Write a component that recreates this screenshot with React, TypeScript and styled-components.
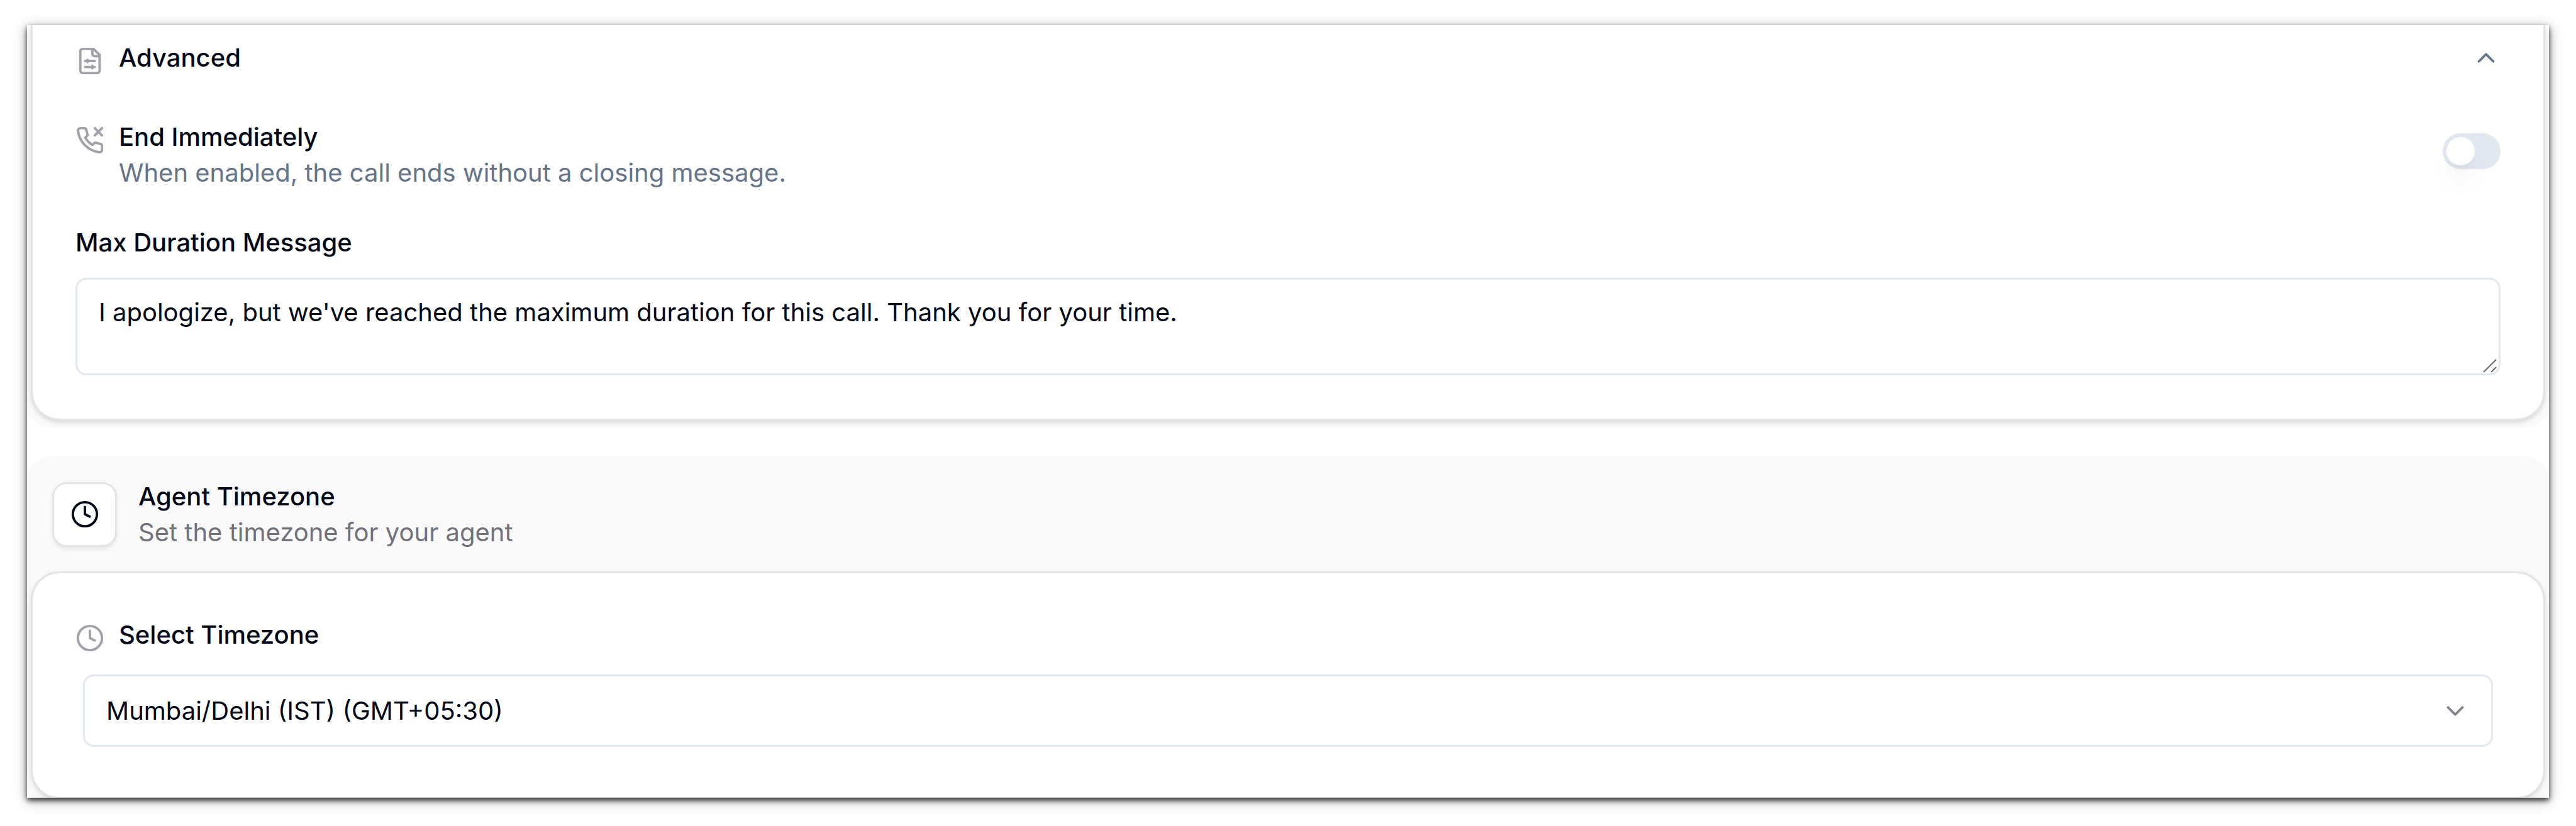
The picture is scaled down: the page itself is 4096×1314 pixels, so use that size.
import React, { useState } from "react";
import styled, { createGlobalStyle } from "styled-components";
import { ChevronDown, ChevronUp, Clock } from "lucide-react";

const GlobalStyle = createGlobalStyle`
  *, *::before, *::after { box-sizing: border-box; }
  body {
    margin: 0;
    background: #ffffff;
    color: #020817;
    font-family: Inter, "Liberation Sans", sans-serif;
    font-size: 40px;
    line-height: 57px;
  }
  button, select, textarea { font: inherit; color: inherit; }
`;

const Page = styled.div`
  padding: 40px 43px 46px;
`;

const Panel = styled.main`
  overflow: hidden;
  background: #ffffff;
  box-shadow: 0 4px 8px rgba(0, 0, 0, 0.8), 0 4px 20px rgba(0, 0, 0, 0.3);
`;

const Section = styled.section<{ $cut: "top" | "bottom" }>`
  margin: 0 -5px ${(p) => (p.$cut === "bottom" ? "-13px" : "46px")};
  padding: 0 11px 11px;
  background: #fafafa;
  border-radius: ${(p) => (p.$cut === "top" ? "0 0 46px 46px" : "46px")};
  overflow: hidden;
`;

const SectionHeader = styled.header`
  display: flex;
  align-items: center;
  gap: 34px;
  padding: 35px 34px 34px;
`;

const IconTile = styled.span`
  display: grid;
  place-items: center;
  width: 103px;
  height: 103px;
  border: 3px solid #e4e4e7;
  border-radius: 23px;
  background: #ffffff;
  box-shadow: 0 3px 9px rgba(0, 0, 0, 0.06), 0 6px 6px -3px rgba(0, 0, 0, 0.04);
`;

const Card = styled.div<{ $cut?: boolean }>`
  padding: ${(p) => (p.$cut ? "23px" : "69px")} 68px 69px;
  border: 3px solid #e4e4e7;
  border-width: ${(p) => (p.$cut ? "0 3px 3px" : "3px")};
  border-radius: ${(p) => (p.$cut ? "0 0 46px 46px" : "46px")};
  background: #ffffff;
  box-shadow: 0 3px 9px rgba(0, 0, 0, 0.1), 0 3px 6px -3px rgba(0, 0, 0, 0.1);
`;

const Title = styled.h2`
  margin: 0;
  font-size: 40px;
  font-weight: 500;
`;

const Label = styled.label`
  display: block;
  font-weight: 500;
`;

const Text = styled.p<{ $tone: string }>`
  margin: 0;
  color: ${(p) => p.$tone};
`;

const Lead = styled.div`
  display: flex;
  align-items: flex-start;
  gap: 23px;
  flex: 1;

  > svg {
    flex: none;
    margin-top: 11px;
    color: #a1a1aa;
  }
`;

const AccordionHeading = styled.h2`
  margin: 0 0 69px;
  font-size: 40px;
  font-weight: 500;
`;

const AccordionButton = styled.button`
  display: flex;
  align-items: center;
  width: 100%;
  padding: 0;
  border: 0;
  background: none;
  text-align: left;

  > svg { color: #64748b; }
`;

const SettingRow = styled.div`
  display: flex;
  align-items: flex-start;
  margin-bottom: 54px;
`;

const Switch = styled.input`
  appearance: none;
  flex: none;
  width: 92px;
  height: 57px;
  margin: 23px 0 0;
  padding: 6px;
  border-radius: 29px;
  background: #e2e8f0;

  &::before {
    content: "";
    display: block;
    width: 45px;
    height: 45px;
    border-radius: 50%;
    background: #ffffff;
    box-shadow: 0 29px 43px -9px rgba(0, 0, 0, 0.1), 0 11px 17px -11px rgba(0, 0, 0, 0.1);
  }

  &:checked { background: #020817; }
  &:checked::before { margin-left: 35px; }
`;

const Message = styled.div`
  position: relative;
  margin-top: 28px;
`;

const TextArea = styled.textarea`
  display: block;
  width: 100%;
  height: 155px;
  padding: 23px 34px;
  border: 3px solid #e2e8f0;
  border-radius: 17px;
  background: #ffffff;
  resize: none;
  overflow: hidden;
`;

const Grip = styled.svg`
  position: absolute;
  right: 6px;
  bottom: 4px;
  pointer-events: none;
`;

const SelectBox = styled.div`
  position: relative;
  margin: 35px 12px 11px;

  > svg {
    position: absolute;
    right: 37px;
    top: 35px;
    color: #020817;
    opacity: 0.5;
    pointer-events: none;
  }
`;

const Select = styled.select`
  appearance: none;
  display: block;
  width: 100%;
  height: 115px;
  padding: 0 34px;
  border: 3px solid #e2e8f0;
  border-radius: 17px;
  background: #ffffff;
`;

const LineIcon = ({ children }: { children: React.ReactNode }) => (
  <svg
    width={46}
    height={46}
    viewBox="0 0 24 24"
    fill="none"
    stroke="currentColor"
    strokeWidth={2}
    strokeLinecap="round"
    strokeLinejoin="round"
    aria-hidden="true"
  >
    {children}
  </svg>
);

const FileSliders = () => (
  <LineIcon>
    <path d="M15 2H6a2 2 0 0 0-2 2v16a2 2 0 0 0 2 2h12a2 2 0 0 0 2-2V7Z" />
    <path d="M14 2v4a2 2 0 0 0 2 2h4" />
    <path d="M8 12h8M10 11v2M8 17h8M14 16v2" />
  </LineIcon>
);

const PhoneX = () => (
  <LineIcon>
    <path d="M22 2l-6 6M16 2l6 6" />
    <path d="M22 16.92v3a2 2 0 0 1-2.18 2 19.79 19.79 0 0 1-8.63-3.07 19.5 19.5 0 0 1-6-6 19.79 19.79 0 0 1-3.07-8.67A2 2 0 0 1 4.11 2h3a2 2 0 0 1 2 1.72 12.84 12.84 0 0 0 .7 2.81 2 2 0 0 1-.45 2.11L8.09 9.91a16 16 0 0 0 6 6l1.27-1.27a2 2 0 0 1 2.11-.45 12.84 12.84 0 0 0 2.81.7A2 2 0 0 1 22 16.92z" />
  </LineIcon>
);

export default function App() {
  const [open, setOpen] = useState(true);
  const [endNow, setEndNow] = useState(false);
  const [message, setMessage] = useState(
    "I apologize, but we've reached the maximum duration for this call. Thank you for your time."
  );

  return (
    <>
      <GlobalStyle />
      <Page>
        <Panel>
          <Section $cut="top">
            <Card $cut>
              <AccordionHeading>
                <AccordionButton type="button" aria-expanded={open} onClick={() => setOpen(!open)}>
                  <Lead as="span">
                    <FileSliders />
                    Advanced
                  </Lead>
                  {open ? <ChevronUp size={46} /> : <ChevronDown size={46} />}
                </AccordionButton>
              </AccordionHeading>
              {open && (
                <>
                  <SettingRow>
                    <Lead>
                      <PhoneX />
                      <div>
                        <Label htmlFor="end-now">End Immediately</Label>
                        <Text id="end-now-hint" $tone="#64748b">
                          When enabled, the call ends without a closing message.
                        </Text>
                      </div>
                    </Lead>
                    <Switch
                      id="end-now"
                      type="checkbox"
                      role="switch"
                      aria-describedby="end-now-hint"
                      checked={endNow}
                      onChange={(e) => setEndNow(e.target.checked)}
                    />
                  </SettingRow>
                  <Label htmlFor="max-message">Max Duration Message</Label>
                  <Message>
                    <TextArea
                      id="max-message"
                      spellCheck={false}
                      value={message}
                      onChange={(e) => setMessage(e.target.value)}
                    />
                    <Grip width={22} height={22} viewBox="0 0 22 22" stroke="#666666" strokeWidth={2} aria-hidden="true">
                      <path d="M1 21L21 1M13 21L21 13" />
                    </Grip>
                  </Message>
                </>
              )}
            </Card>
          </Section>

          <Section $cut="bottom">
            <SectionHeader>
              <IconTile>
                <Clock size={46} />
              </IconTile>
              <div>
                <Title>Agent Timezone</Title>
                <Text $tone="#71717a">Set the timezone for your agent</Text>
              </div>
            </SectionHeader>
            <Card>
              <Lead>
                <Clock size={46} />
                <Label htmlFor="timezone">Select Timezone</Label>
              </Lead>
              <SelectBox>
                <Select id="timezone" defaultValue="ist">
                  <option value="ist">Mumbai/Delhi (IST) (GMT+05:30)</option>
                </Select>
                <ChevronDown size={46} />
              </SelectBox>
            </Card>
          </Section>
        </Panel>
      </Page>
    </>
  );
}
